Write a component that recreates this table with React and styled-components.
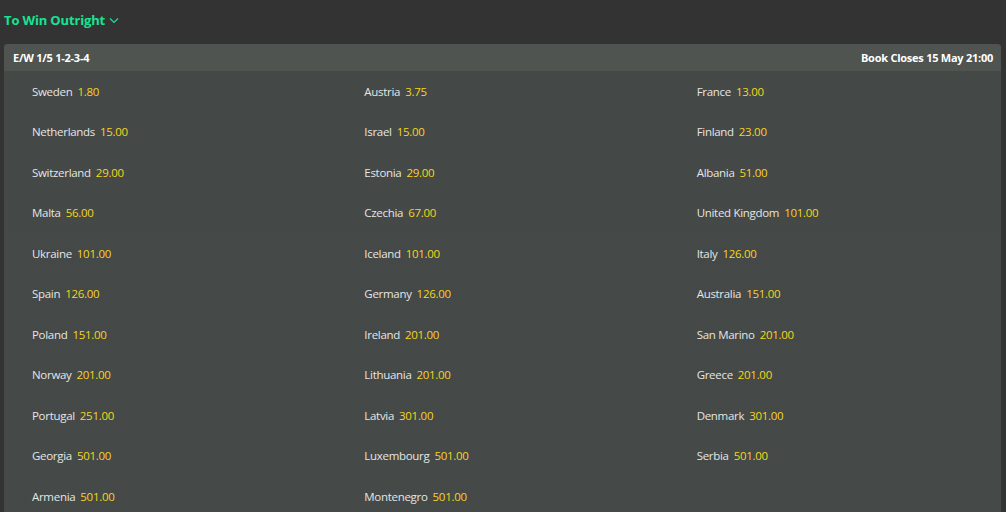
import React from 'react'
import styled, {createGlobalStyle} from 'styled-components'

const Global = createGlobalStyle`
    html, body {
        margin: 0;
        padding: 0;
        background: #333333;
        font-family: "Segoe UI", "Open Sans", "Noto Sans", sans-serif;
    }
`

const Page = styled.div`
    width: 1006px;
    height: 512px;
    overflow: hidden;
    padding: 0 5px 0 4px;
    box-sizing: border-box;
`

const Title = styled.button`
    display: flex;
    align-items: center;
    gap: 4px;
    height: 40px;
    margin: 0;
    padding: 0;
    border: none;
    background: none;
    color: #17e393;
    font-family: inherit;
    font-size: 13px;
    font-weight: 700;
    letter-spacing: -0.15px;
    cursor: pointer;
    & > svg {
        margin-top: 1px;
    }
`

const Panel = styled.section`
    margin-top: 4px;
    border-radius: 4px 4px 0 0;
    background: linear-gradient(180deg, #444846 0%, #454947 100%);
    overflow: hidden;
`

const Header = styled.header`
    display: flex;
    align-items: center;
    justify-content: space-between;
    height: 27px;
    padding: 0 8px 0 9px;
    background: #4f5451;
    color: #ffffff;
    font-size: 11px;
    font-weight: 700;
    letter-spacing: -0.25px;
`

const Grid = styled.div`
    display: grid;
    grid-template-columns: repeat(3, 1fr);
    grid-auto-rows: 40.5px;
`

const Cell = styled.div`
    display: flex;
    align-items: center;
    gap: 5px;
    padding-left: 28px;
    font-size: 11.5px;
    letter-spacing: -0.3px;
    cursor: ${({empty}) => empty ? 'default' : 'pointer'};
`

const Name = styled.span`
    color: #e4e6e5;
`

const Odds = styled.span`
    color: #f7d51d;
`

const runners = [
    ['Sweden', '1.80'], ['Austria', '3.75'], ['France', '13.00'],
    ['Netherlands', '15.00'], ['Israel', '15.00'], ['Finland', '23.00'],
    ['Switzerland', '29.00'], ['Estonia', '29.00'], ['Albania', '51.00'],
    ['Malta', '56.00'], ['Czechia', '67.00'], ['United Kingdom', '101.00'],
    ['Ukraine', '101.00'], ['Iceland', '101.00'], ['Italy', '126.00'],
    ['Spain', '126.00'], ['Germany', '126.00'], ['Australia', '151.00'],
    ['Poland', '151.00'], ['Ireland', '201.00'], ['San Marino', '201.00'],
    ['Norway', '201.00'], ['Lithuania', '201.00'], ['Greece', '201.00'],
    ['Portugal', '251.00'], ['Latvia', '301.00'], ['Denmark', '301.00'],
    ['Georgia', '501.00'], ['Luxembourg', '501.00'], ['Serbia', '501.00'],
    ['Armenia', '501.00'], ['Montenegro', '501.00'],
]

function Chevron() {
    return (
        <svg width="10" height="7" viewBox="0 0 10 7" fill="none">
            <path d="M1 1.5 L5 5.5 L9 1.5" stroke="#17e393" strokeWidth="1.2" />
        </svg>
    )
}

export default function App() {
    return (
        <Page>
            <Global />
            <Title>To Win Outright <Chevron /></Title>
            <Panel>
                <Header>
                    <span>E/W 1/5 1-2-3-4</span>
                    <span>Book Closes 15 May 21:00</span>
                </Header>
                <Grid>
                    {runners.map(([name, odds]) => (
                        <Cell key={name}>
                            <Name>{name}</Name>
                            <Odds>{odds}</Odds>
                        </Cell>
                    ))}
                    <Cell empty />
                </Grid>
            </Panel>
        </Page>
    )
}
